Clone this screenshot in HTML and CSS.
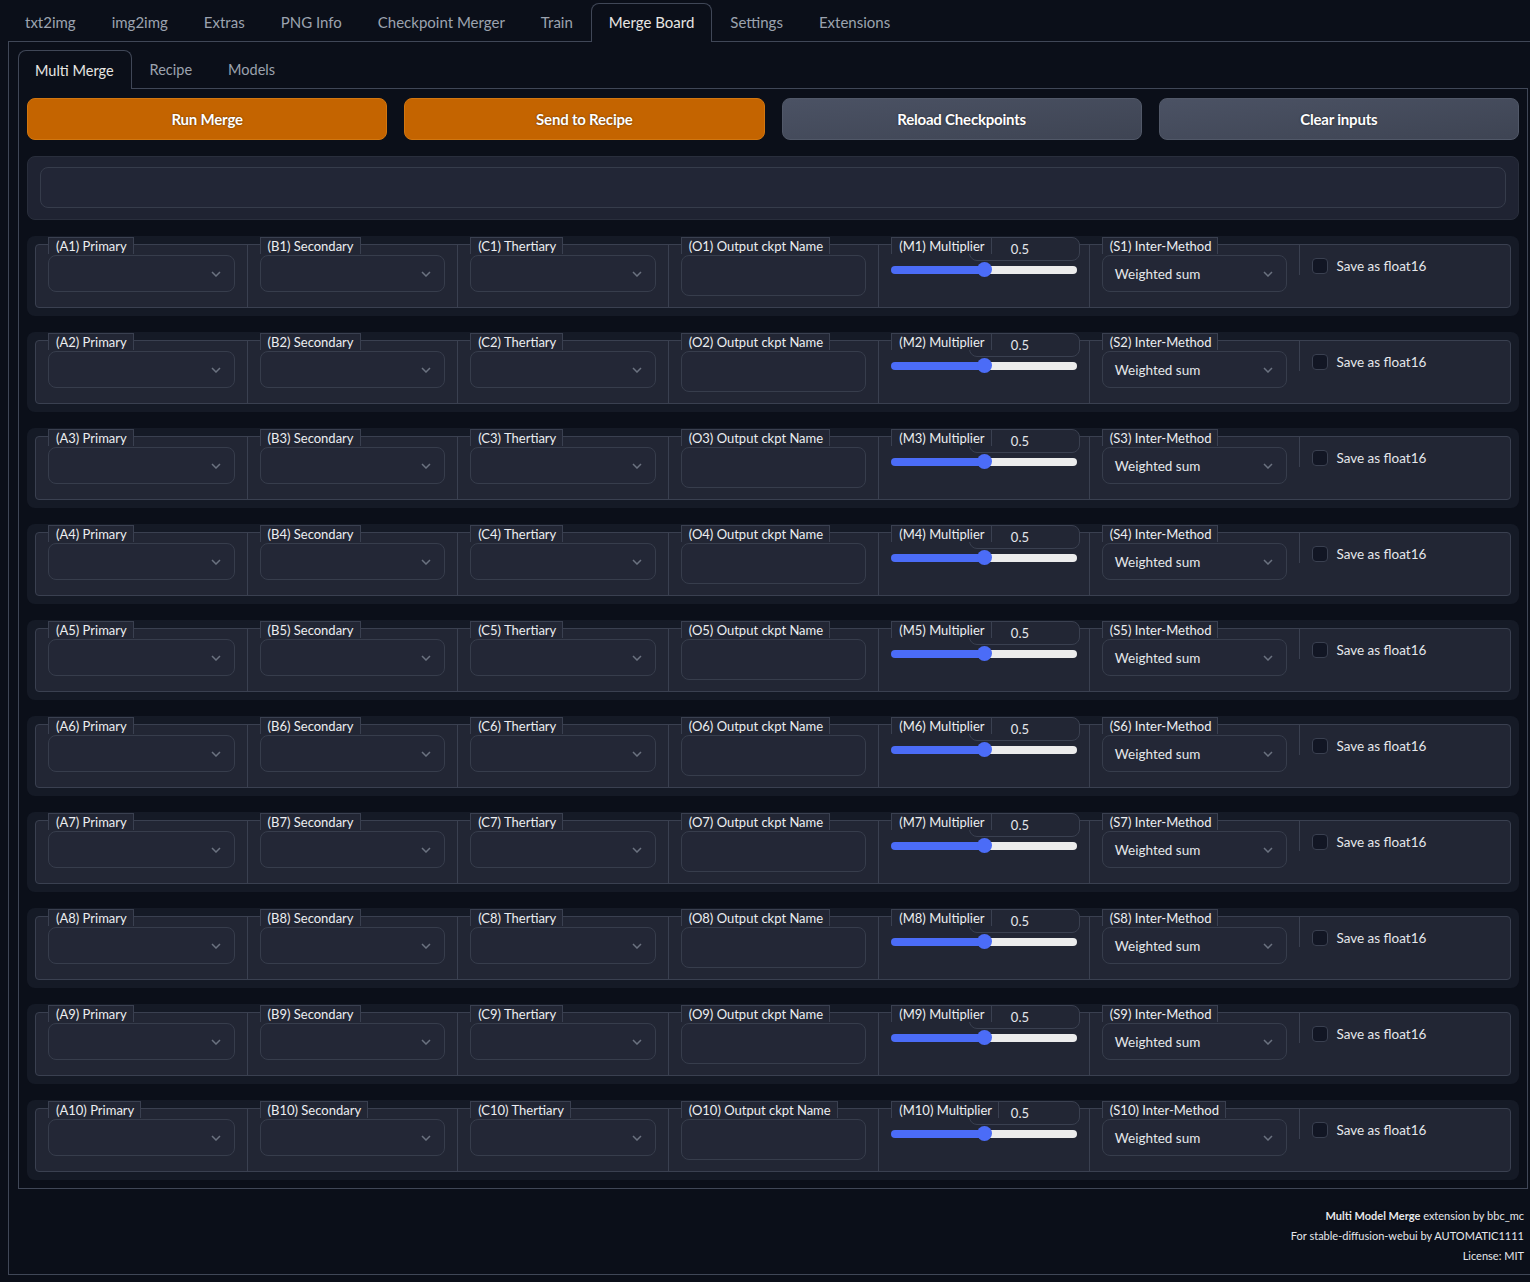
FILE: index.html
```html
<!DOCTYPE html>
<html>
<head>
<meta charset="utf-8">
<link rel="stylesheet" href="styles.css">
</head>
<body>
<nav class="topnav">
  <div class="tab">txt2img</div>
  <div class="tab">img2img</div>
  <div class="tab">Extras</div>
  <div class="tab">PNG Info</div>
  <div class="tab">Checkpoint Merger</div>
  <div class="tab">Train</div>
  <div class="tab sel">Merge Board</div>
  <div class="tab">Settings</div>
  <div class="tab">Extensions</div>
</nav>
<div class="outer">
  <nav class="subnav">
    <div class="tab sel">Multi Merge</div>
    <div class="tab">Recipe</div>
    <div class="tab">Models</div>
  </nav>
  <div class="inner">
    <div class="buttons">
      <button class="btn primary">Run Merge</button>
      <button class="btn primary">Send to Recipe</button>
      <button class="btn secondary">Reload Checkpoints</button>
      <button class="btn secondary">Clear inputs</button>
    </div>
    <div class="textblock"><div class="textinput"></div></div>

    <div class="row"><div class="panel">
      <div class="col"><span class="lbl">(A1) Primary</span><div class="dd"><svg class="chev" width="10" height="6" viewBox="0 0 10 6"><path d="M1 1l4 4 4-4"/></svg></div></div>
      <div class="col"><span class="lbl">(B1) Secondary</span><div class="dd"><svg class="chev" width="10" height="6" viewBox="0 0 10 6"><path d="M1 1l4 4 4-4"/></svg></div></div>
      <div class="col"><span class="lbl">(C1) Thertiary</span><div class="dd"><svg class="chev" width="10" height="6" viewBox="0 0 10 6"><path d="M1 1l4 4 4-4"/></svg></div></div>
      <div class="col"><span class="lbl">(O1) Output ckpt Name</span><div class="tb"></div></div>
      <div class="col"><div class="mhead"><span class="lbl">(M1) Multiplier</span><div class="num">0.5</div></div><div class="slider"><div class="fill"></div><div class="thumb"></div><div class="rest"></div></div></div>
      <div class="col"><span class="lbl">(S1) Inter-Method</span><div class="dd"><span class="val">Weighted sum</span><svg class="chev" width="10" height="6" viewBox="0 0 10 6"><path d="M1 1l4 4 4-4"/></svg></div></div>
      <div class="col chk"><span class="box"></span><span class="chklbl">Save as float16</span></div>
    </div></div>

    <div class="row"><div class="panel">
      <div class="col"><span class="lbl">(A2) Primary</span><div class="dd"><svg class="chev" width="10" height="6" viewBox="0 0 10 6"><path d="M1 1l4 4 4-4"/></svg></div></div>
      <div class="col"><span class="lbl">(B2) Secondary</span><div class="dd"><svg class="chev" width="10" height="6" viewBox="0 0 10 6"><path d="M1 1l4 4 4-4"/></svg></div></div>
      <div class="col"><span class="lbl">(C2) Thertiary</span><div class="dd"><svg class="chev" width="10" height="6" viewBox="0 0 10 6"><path d="M1 1l4 4 4-4"/></svg></div></div>
      <div class="col"><span class="lbl">(O2) Output ckpt Name</span><div class="tb"></div></div>
      <div class="col"><div class="mhead"><span class="lbl">(M2) Multiplier</span><div class="num">0.5</div></div><div class="slider"><div class="fill"></div><div class="thumb"></div><div class="rest"></div></div></div>
      <div class="col"><span class="lbl">(S2) Inter-Method</span><div class="dd"><span class="val">Weighted sum</span><svg class="chev" width="10" height="6" viewBox="0 0 10 6"><path d="M1 1l4 4 4-4"/></svg></div></div>
      <div class="col chk"><span class="box"></span><span class="chklbl">Save as float16</span></div>
    </div></div>

    <div class="row"><div class="panel">
      <div class="col"><span class="lbl">(A3) Primary</span><div class="dd"><svg class="chev" width="10" height="6" viewBox="0 0 10 6"><path d="M1 1l4 4 4-4"/></svg></div></div>
      <div class="col"><span class="lbl">(B3) Secondary</span><div class="dd"><svg class="chev" width="10" height="6" viewBox="0 0 10 6"><path d="M1 1l4 4 4-4"/></svg></div></div>
      <div class="col"><span class="lbl">(C3) Thertiary</span><div class="dd"><svg class="chev" width="10" height="6" viewBox="0 0 10 6"><path d="M1 1l4 4 4-4"/></svg></div></div>
      <div class="col"><span class="lbl">(O3) Output ckpt Name</span><div class="tb"></div></div>
      <div class="col"><div class="mhead"><span class="lbl">(M3) Multiplier</span><div class="num">0.5</div></div><div class="slider"><div class="fill"></div><div class="thumb"></div><div class="rest"></div></div></div>
      <div class="col"><span class="lbl">(S3) Inter-Method</span><div class="dd"><span class="val">Weighted sum</span><svg class="chev" width="10" height="6" viewBox="0 0 10 6"><path d="M1 1l4 4 4-4"/></svg></div></div>
      <div class="col chk"><span class="box"></span><span class="chklbl">Save as float16</span></div>
    </div></div>

    <div class="row"><div class="panel">
      <div class="col"><span class="lbl">(A4) Primary</span><div class="dd"><svg class="chev" width="10" height="6" viewBox="0 0 10 6"><path d="M1 1l4 4 4-4"/></svg></div></div>
      <div class="col"><span class="lbl">(B4) Secondary</span><div class="dd"><svg class="chev" width="10" height="6" viewBox="0 0 10 6"><path d="M1 1l4 4 4-4"/></svg></div></div>
      <div class="col"><span class="lbl">(C4) Thertiary</span><div class="dd"><svg class="chev" width="10" height="6" viewBox="0 0 10 6"><path d="M1 1l4 4 4-4"/></svg></div></div>
      <div class="col"><span class="lbl">(O4) Output ckpt Name</span><div class="tb"></div></div>
      <div class="col"><div class="mhead"><span class="lbl">(M4) Multiplier</span><div class="num">0.5</div></div><div class="slider"><div class="fill"></div><div class="thumb"></div><div class="rest"></div></div></div>
      <div class="col"><span class="lbl">(S4) Inter-Method</span><div class="dd"><span class="val">Weighted sum</span><svg class="chev" width="10" height="6" viewBox="0 0 10 6"><path d="M1 1l4 4 4-4"/></svg></div></div>
      <div class="col chk"><span class="box"></span><span class="chklbl">Save as float16</span></div>
    </div></div>

    <div class="row"><div class="panel">
      <div class="col"><span class="lbl">(A5) Primary</span><div class="dd"><svg class="chev" width="10" height="6" viewBox="0 0 10 6"><path d="M1 1l4 4 4-4"/></svg></div></div>
      <div class="col"><span class="lbl">(B5) Secondary</span><div class="dd"><svg class="chev" width="10" height="6" viewBox="0 0 10 6"><path d="M1 1l4 4 4-4"/></svg></div></div>
      <div class="col"><span class="lbl">(C5) Thertiary</span><div class="dd"><svg class="chev" width="10" height="6" viewBox="0 0 10 6"><path d="M1 1l4 4 4-4"/></svg></div></div>
      <div class="col"><span class="lbl">(O5) Output ckpt Name</span><div class="tb"></div></div>
      <div class="col"><div class="mhead"><span class="lbl">(M5) Multiplier</span><div class="num">0.5</div></div><div class="slider"><div class="fill"></div><div class="thumb"></div><div class="rest"></div></div></div>
      <div class="col"><span class="lbl">(S5) Inter-Method</span><div class="dd"><span class="val">Weighted sum</span><svg class="chev" width="10" height="6" viewBox="0 0 10 6"><path d="M1 1l4 4 4-4"/></svg></div></div>
      <div class="col chk"><span class="box"></span><span class="chklbl">Save as float16</span></div>
    </div></div>

    <div class="row"><div class="panel">
      <div class="col"><span class="lbl">(A6) Primary</span><div class="dd"><svg class="chev" width="10" height="6" viewBox="0 0 10 6"><path d="M1 1l4 4 4-4"/></svg></div></div>
      <div class="col"><span class="lbl">(B6) Secondary</span><div class="dd"><svg class="chev" width="10" height="6" viewBox="0 0 10 6"><path d="M1 1l4 4 4-4"/></svg></div></div>
      <div class="col"><span class="lbl">(C6) Thertiary</span><div class="dd"><svg class="chev" width="10" height="6" viewBox="0 0 10 6"><path d="M1 1l4 4 4-4"/></svg></div></div>
      <div class="col"><span class="lbl">(O6) Output ckpt Name</span><div class="tb"></div></div>
      <div class="col"><div class="mhead"><span class="lbl">(M6) Multiplier</span><div class="num">0.5</div></div><div class="slider"><div class="fill"></div><div class="thumb"></div><div class="rest"></div></div></div>
      <div class="col"><span class="lbl">(S6) Inter-Method</span><div class="dd"><span class="val">Weighted sum</span><svg class="chev" width="10" height="6" viewBox="0 0 10 6"><path d="M1 1l4 4 4-4"/></svg></div></div>
      <div class="col chk"><span class="box"></span><span class="chklbl">Save as float16</span></div>
    </div></div>

    <div class="row"><div class="panel">
      <div class="col"><span class="lbl">(A7) Primary</span><div class="dd"><svg class="chev" width="10" height="6" viewBox="0 0 10 6"><path d="M1 1l4 4 4-4"/></svg></div></div>
      <div class="col"><span class="lbl">(B7) Secondary</span><div class="dd"><svg class="chev" width="10" height="6" viewBox="0 0 10 6"><path d="M1 1l4 4 4-4"/></svg></div></div>
      <div class="col"><span class="lbl">(C7) Thertiary</span><div class="dd"><svg class="chev" width="10" height="6" viewBox="0 0 10 6"><path d="M1 1l4 4 4-4"/></svg></div></div>
      <div class="col"><span class="lbl">(O7) Output ckpt Name</span><div class="tb"></div></div>
      <div class="col"><div class="mhead"><span class="lbl">(M7) Multiplier</span><div class="num">0.5</div></div><div class="slider"><div class="fill"></div><div class="thumb"></div><div class="rest"></div></div></div>
      <div class="col"><span class="lbl">(S7) Inter-Method</span><div class="dd"><span class="val">Weighted sum</span><svg class="chev" width="10" height="6" viewBox="0 0 10 6"><path d="M1 1l4 4 4-4"/></svg></div></div>
      <div class="col chk"><span class="box"></span><span class="chklbl">Save as float16</span></div>
    </div></div>

    <div class="row"><div class="panel">
      <div class="col"><span class="lbl">(A8) Primary</span><div class="dd"><svg class="chev" width="10" height="6" viewBox="0 0 10 6"><path d="M1 1l4 4 4-4"/></svg></div></div>
      <div class="col"><span class="lbl">(B8) Secondary</span><div class="dd"><svg class="chev" width="10" height="6" viewBox="0 0 10 6"><path d="M1 1l4 4 4-4"/></svg></div></div>
      <div class="col"><span class="lbl">(C8) Thertiary</span><div class="dd"><svg class="chev" width="10" height="6" viewBox="0 0 10 6"><path d="M1 1l4 4 4-4"/></svg></div></div>
      <div class="col"><span class="lbl">(O8) Output ckpt Name</span><div class="tb"></div></div>
      <div class="col"><div class="mhead"><span class="lbl">(M8) Multiplier</span><div class="num">0.5</div></div><div class="slider"><div class="fill"></div><div class="thumb"></div><div class="rest"></div></div></div>
      <div class="col"><span class="lbl">(S8) Inter-Method</span><div class="dd"><span class="val">Weighted sum</span><svg class="chev" width="10" height="6" viewBox="0 0 10 6"><path d="M1 1l4 4 4-4"/></svg></div></div>
      <div class="col chk"><span class="box"></span><span class="chklbl">Save as float16</span></div>
    </div></div>

    <div class="row"><div class="panel">
      <div class="col"><span class="lbl">(A9) Primary</span><div class="dd"><svg class="chev" width="10" height="6" viewBox="0 0 10 6"><path d="M1 1l4 4 4-4"/></svg></div></div>
      <div class="col"><span class="lbl">(B9) Secondary</span><div class="dd"><svg class="chev" width="10" height="6" viewBox="0 0 10 6"><path d="M1 1l4 4 4-4"/></svg></div></div>
      <div class="col"><span class="lbl">(C9) Thertiary</span><div class="dd"><svg class="chev" width="10" height="6" viewBox="0 0 10 6"><path d="M1 1l4 4 4-4"/></svg></div></div>
      <div class="col"><span class="lbl">(O9) Output ckpt Name</span><div class="tb"></div></div>
      <div class="col"><div class="mhead"><span class="lbl">(M9) Multiplier</span><div class="num">0.5</div></div><div class="slider"><div class="fill"></div><div class="thumb"></div><div class="rest"></div></div></div>
      <div class="col"><span class="lbl">(S9) Inter-Method</span><div class="dd"><span class="val">Weighted sum</span><svg class="chev" width="10" height="6" viewBox="0 0 10 6"><path d="M1 1l4 4 4-4"/></svg></div></div>
      <div class="col chk"><span class="box"></span><span class="chklbl">Save as float16</span></div>
    </div></div>

    <div class="row"><div class="panel">
      <div class="col"><span class="lbl">(A10) Primary</span><div class="dd"><svg class="chev" width="10" height="6" viewBox="0 0 10 6"><path d="M1 1l4 4 4-4"/></svg></div></div>
      <div class="col"><span class="lbl">(B10) Secondary</span><div class="dd"><svg class="chev" width="10" height="6" viewBox="0 0 10 6"><path d="M1 1l4 4 4-4"/></svg></div></div>
      <div class="col"><span class="lbl">(C10) Thertiary</span><div class="dd"><svg class="chev" width="10" height="6" viewBox="0 0 10 6"><path d="M1 1l4 4 4-4"/></svg></div></div>
      <div class="col"><span class="lbl">(O10) Output ckpt Name</span><div class="tb"></div></div>
      <div class="col"><div class="mhead"><span class="lbl">(M10) Multiplier</span><div class="num">0.5</div></div><div class="slider"><div class="fill"></div><div class="thumb"></div><div class="rest"></div></div></div>
      <div class="col"><span class="lbl">(S10) Inter-Method</span><div class="dd"><span class="val">Weighted sum</span><svg class="chev" width="10" height="6" viewBox="0 0 10 6"><path d="M1 1l4 4 4-4"/></svg></div></div>
      <div class="col chk"><span class="box"></span><span class="chklbl">Save as float16</span></div>
    </div></div>
  </div>
  <footer class="footer">
    <div><b>Multi Model Merge</b> extension by bbc_mc</div>
    <div>For stable-diffusion-webui by AUTOMATIC1111</div>
    <div>License: MIT</div>
  </footer>
</div>
</body>
</html>
```

FILE: styles.css
```css
* { box-sizing: border-box; }
html, body {
  margin: 0;
  background: #0b0f19;
  overflow: hidden;
}
body {
  font-family: Lato, "Noto Sans", sans-serif;
  color: #e5e7eb;
}

/* tabs */
.topnav {
  display: flex;
  height: 41px;
  padding: 3px 0 0 7px;
}
.subnav {
  display: flex;
  height: 38px;
}
.tab {
  display: flex;
  align-items: center;
  height: 38px;
  padding: 0 17px 2px;
  border: 1px solid transparent;
  border-bottom: none;
  border-radius: 8px 8px 0 0;
  font-size: 15px;
  color: #9ca3af;
}
.subnav .tab {
  padding: 0 17px 0 17px;
  font-size: 14.5px;
}
.subnav .tab.sel {
  padding: 0 17px 0 16px;
}
.tab.sel {
  position: relative;
  z-index: 2;
  height: 39px;
  border-color: #404757;
  background: #0b0f19;
  color: #e8e6e3;
}

.outer {
  margin-left: 8px;
  width: 1530px;
  border: 1px solid #404757;
  padding: 8px 9px 8px;
}
.inner {
  width: 1510px;
  border: 1px solid #404757;
  padding: 9px 8px 8px;
  display: flex;
  flex-direction: column;
  gap: 16px;
}

/* buttons */
.buttons {
  display: grid;
  grid-template-columns: repeat(4, 1fr);
  gap: 17px;
}
.btn {
  height: 42px;
  border-radius: 8px;
  font-family: Lato, "Noto Sans", sans-serif;
  font-size: 15px;
  font-weight: 700;
  color: #ffffff;
  text-shadow: 0 0 2px rgba(0,0,0,0.6);
  letter-spacing: -0.2px;
}
.btn.primary {
  background: #c46400;
  border: 1px solid #d2760f;
}
.btn.secondary {
  background: linear-gradient(to bottom right, #4b5264, #3e4453);
  border: 1px solid #515868;
}

/* text block */
.textblock {
  height: 64px;
  background: #1f2332;
  border: 1px solid #292e3c;
  border-radius: 8px;
  padding: 10px 12px 11px;
}
.textinput {
  height: 41px;
  background: #222636;
  border: 1px solid #363c4b;
  border-radius: 8px;
}

/* rows */
.row {
  height: 80px;
  background: #151a26;
  border-radius: 8px;
  padding: 8px 8px 8px;
}
.panel {
  height: 64px;
  display: grid;
  grid-template-columns: repeat(7, 1fr);
  background: #222634;
  border: 1px solid #3a4050;
  border-radius: 4px;
}
.col {
  display: flex;
  flex-direction: column;
  align-items: flex-start;
  padding: 0 12px;
  min-width: 0;
}
.col + .col {
  border-left: 1px solid #3a4050;
}
.lbl {
  position: relative;
  z-index: 1;
  margin-top: -8px;
  height: 17px;
  padding: 0 6px 0 7px;
  border: 1px solid #3a4050;
  border-bottom: none;
  background: #222634;
  font-size: 13px;
  line-height: 16px;
  color: #eceef1;
  white-space: nowrap;
}
.dd {
  margin-top: 1px;
  width: 100%;
  height: 37px;
  border: 1px solid #373d4c;
  border-radius: 8px;
  background: #232736;
  display: flex;
  align-items: center;
  justify-content: flex-end;
  padding: 0 13px 0 12px;
}
.dd .val {
  margin-right: auto;
  font-size: 13.5px;
  color: #e5e7eb;
}
.chev path {
  fill: none;
  stroke: #6b7280;
  stroke-width: 1.5;
}
.tb {
  margin-top: 1px;
  width: 100%;
  height: 41px;
  border: 1px solid #373d4c;
  border-radius: 8px;
  background: #232736;
}

/* multiplier */
.mhead {
  display: grid;
  margin-top: -8px;
  width: 100%;
}
.mhead > * {
  grid-area: 1 / 1;
}
.mhead .lbl {
  margin-top: 0;
  justify-self: start;
}
.num {
  justify-self: end;
  margin-right: -3px;
  width: 111px;
  height: 24px;
  border: 1px solid #3a4050;
  border-radius: 8px;
  background: #222634;
  padding-left: 41px;
  font-size: 13px;
  line-height: 22px;
  color: #e5e7eb;
}
.slider {
  margin-top: 1px;
  width: 100%;
  height: 15px;
  display: flex;
  align-items: center;
}
.fill, .rest {
  flex: 1;
  height: 8px;
}
.fill {
  background: #4b6cf7;
  border-radius: 4px 0 0 4px;
}
.rest {
  background: #ececec;
  border-radius: 0 4px 4px 0;
}
.thumb {
  position: relative;
  z-index: 1;
  flex: none;
  width: 15px;
  height: 15px;
  margin: 0 -7px;
  border-radius: 50%;
  background: #4b6cf7;
}

/* checkbox */
.col.chk {
  flex-direction: row;
  align-items: center;
  align-self: start;
  padding: 12px 11px 0 12px;
  gap: 8px;
}
.box {
  width: 16px;
  height: 16px;
  border: 1px solid #3a4050;
  border-radius: 4px;
  background: #121624;
}
.chklbl {
  font-size: 13.5px;
  line-height: 18px;
  color: #e5e7eb;
}

/* footer */
.footer {
  padding: 17px 4px 0 0;
  text-align: right;
  font-size: 11px;
  line-height: 20px;
  color: #e5e7eb;
}
.footer b {
  font-weight: 700;
  text-shadow: 0 0 2px rgba(0,0,0,0.6);
}
```
